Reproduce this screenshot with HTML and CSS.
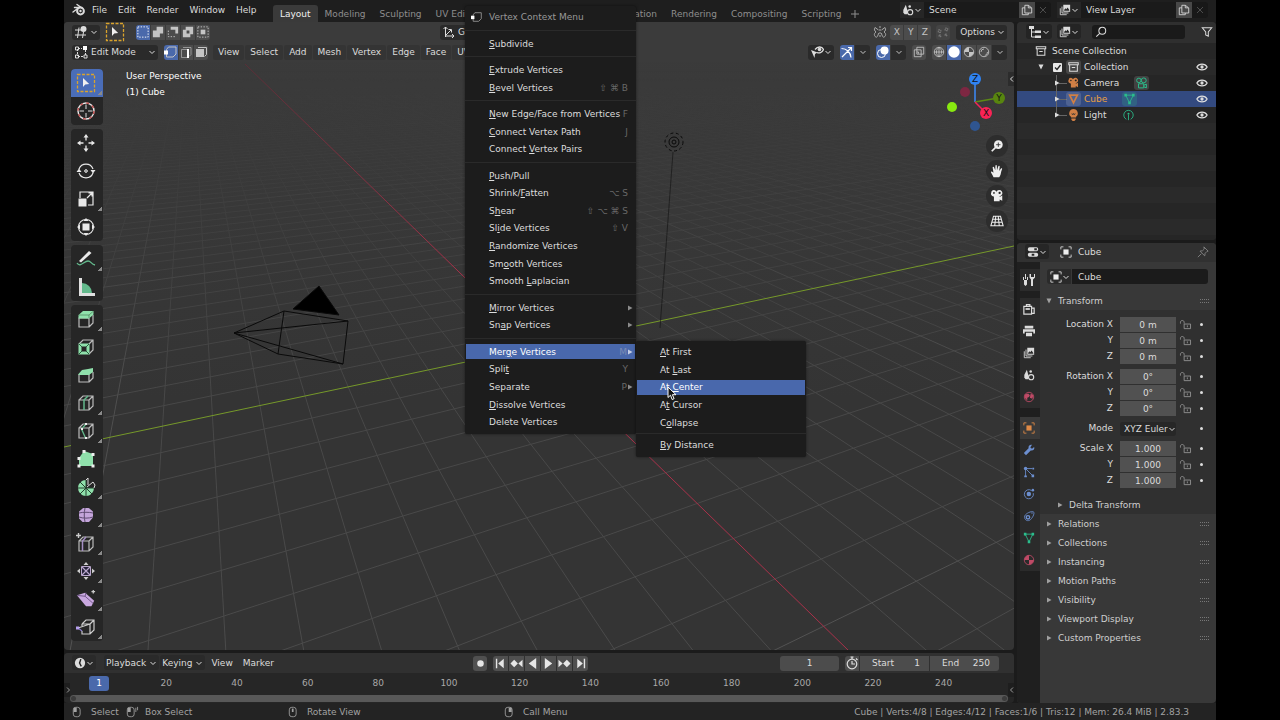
FILE: index.html
```html
<!DOCTYPE html>
<html lang="en">
<head>
<meta charset="utf-8">
<title>Blender</title>
<link rel="stylesheet" href="styles.css">
</head>
<body>
<svg class="defs" aria-hidden="true">
  <symbol id="chev" viewBox="0 0 8 8"><path d="M1.500 3 4 5.500 6.500 3" fill="none" stroke="currentColor"/></symbol>
  <symbol id="chevl" viewBox="0 0 8 8"><path d="M5 1.500 2.500 4 5 6.500" fill="none" stroke="currentColor"/></symbol>
  <symbol id="chevr" viewBox="0 0 8 8"><path d="M3 1.500 5.500 4 3 6.500" fill="none" stroke="currentColor"/></symbol>
  <symbol id="tri" viewBox="0 0 8 8"><path d="M2 1.500v5l4.500-2.500z" fill="currentColor"/></symbol>
  <symbol id="trid" viewBox="0 0 8 8"><path d="M1.500 1.500h5l-2.500 5z" fill="currentColor"/></symbol>
  <symbol id="logo" viewBox="0 0 14 14"><path d="M1 9 7 4.500H2.500M5 1.500l5 3.500" fill="none" stroke="currentColor" stroke-width="1.400" stroke-linecap="round"/><circle cx="8.500" cy="8" r="3.400" fill="none" stroke="currentColor" stroke-width="2"/><circle cx="8.500" cy="8" r="1.200" fill="currentColor"/></symbol>
  <symbol id="editor" viewBox="0 0 14 14"><path d="M1 5h6M1 10h11M5 2.500 3.500 13M9.500 7 8.500 13" stroke="currentColor" fill="none"/><circle cx="9.500" cy="4" r="3" fill="currentColor"/></symbol>
  <symbol id="boxsel" viewBox="0 0 20 20"><rect x="1.500" y="1.500" width="17" height="17" fill="none" stroke="#d9a32c" stroke-width="1.300" stroke-dasharray="3 1.500"/><path d="M7 5v9l2.200-2.400 4-.5z" fill="#f0f0f0"/></symbol>
  <symbol id="s1" viewBox="0 0 15 15"><rect x="2" y="2" width="11" height="11" fill="none" stroke="#fff" stroke-dasharray="1.500 1.500"/></symbol>
  <symbol id="s2" viewBox="0 0 15 15"><path d="M6 2h7v7H9.500v4H2V6h4z" fill="currentColor"/></symbol>
  <symbol id="s3" viewBox="0 0 15 15"><path d="M5 2h8v7h-3V5H5z" fill="currentColor"/><path d="M2.500 6v6.500h7" fill="none" stroke="currentColor" stroke-dasharray="1.500 1.500"/></symbol>
  <symbol id="s4" viewBox="0 0 15 15"><path d="M5 2h8v8h-3v3H2V5h3zM6 6v3h3V6z" fill="currentColor" fill-rule="evenodd"/></symbol>
  <symbol id="s5" viewBox="0 0 15 15"><rect x="2" y="2" width="11" height="11" fill="none" stroke="currentColor" stroke-dasharray="1.500 1.500"/><rect x="5" y="5" width="5" height="5" fill="currentColor"/></symbol>
  <symbol id="axes" viewBox="0 0 14 14"><path d="M3.500 12V2M1.500 4l2-2 2 2M3.500 11h8M10 9l2 2-2 2M4 10l5-5M6.500 4.500h3v3" fill="none" stroke="currentColor"/></symbol>
  <symbol id="editmode" viewBox="0 0 14 14"><path d="M3.500 4v7M4 11.500h6M11.500 10V5M4 3.500h4" stroke="currentColor" stroke-dasharray="2 1" fill="none"/><path d="M1.500 2h3v3h-3zM1.500 10h3v3h-3zM10 10h3v3h-3z" fill="none" stroke="currentColor"/><rect x="9" y="1" width="4" height="4" fill="#fff"/></symbol>
  <symbol id="vert" viewBox="0 0 14 14"><path d="M2.500 6V4.500L4.500 2H12v7l-3 3H2.500V9" fill="none" stroke="currentColor"/><rect x="0" y="5.500" width="4" height="4" fill="#fff"/></symbol>
  <symbol id="edge" viewBox="0 0 14 14"><path d="M8.500 4.500h-6v8h6M4 2.500h8v7l-2 2" fill="none" stroke="currentColor" opacity=".6"/><rect x="8" y="4" width="2" height="9" fill="#fff"/></symbol>
  <symbol id="face" viewBox="0 0 14 14"><path d="M4 2.500h8.500v7l-2 2" fill="none" stroke="currentColor"/><rect x="2" y="4" width="8" height="8" fill="currentColor"/></symbol>
  <symbol id="mirror" viewBox="0 0 14 14"><path d="M7 1v12" stroke="currentColor" stroke-dasharray="2 1"/><path d="M5.500 5 2 2.500C.8 4 1.500 6 3 7-.2 9 2 12 3.500 12.300 5 11 5.500 9 5.500 8M8.500 5 12 2.500c1.200 1.500.5 3.500-1 4.500 3.200 2 1 5-.5 5.300C9 11 8.500 9 8.500 8" fill="none" stroke="currentColor"/></symbol>
  <symbol id="snap" viewBox="0 0 14 14"><path d="M9.500 2.500h3v3h-3zM1.500 4.500h3v3h-3zM2.500 10.500h2v2h-2zM9.500 9.500h2v2h-2z" fill="none" stroke="currentColor" stroke-dasharray="2 1"/></symbol>
  <symbol id="eyecur" viewBox="0 0 14 14"><path d="M5 4.500C8 .8 12 1.500 13.500 4.500 12 8 9 8.500 7 7.500" fill="none" stroke="currentColor" stroke-width="1.300"/><circle cx="9.500" cy="4.500" r="1.800" fill="currentColor"/><path d="M1 5l6.500 2.500L5 9l-.5 4z" fill="currentColor"/></symbol>
  <symbol id="gizmo" viewBox="0 0 14 14"><path d="M2 12 11.500 2.500M8 2.500h3.500V6M1.500 3.500c5 0 9 3.500 9.500 9" fill="none" stroke="#fff" stroke-width="1.200"/></symbol>
  <symbol id="over" viewBox="0 0 14 14"><circle cx="5.500" cy="8.500" r="4" fill="none" stroke="#fff"/><circle cx="8.500" cy="5.500" r="4" fill="#fff"/></symbol>
  <symbol id="xray" viewBox="0 0 14 14"><path d="M1.500 4.500h8v8h-8zM4.500 1.500h8v8h-8z" fill="none" stroke="currentColor"/><path d="M4.500 7h2v2" stroke="currentColor" fill="none"/></symbol>
  <symbol id="wire" viewBox="0 0 14 14"><circle cx="7" cy="7" r="5.500" fill="none" stroke="currentColor"/><path d="M1.500 7h11M7 1.500v11M7 1.500c-4 3-4 8 0 11M7 1.500c4 3 4 8 0 11" fill="none" stroke="currentColor"/></symbol>
  <symbol id="solid" viewBox="0 0 14 14"><circle cx="7" cy="7" r="5.700" fill="#fff"/></symbol>
  <symbol id="mat" viewBox="0 0 14 14"><circle cx="7" cy="7" r="5.500" fill="none" stroke="currentColor"/><path d="M7 1.500A5.500 5.500 0 0 0 1.500 7h5.500zM7 7h5.500A5.500 5.500 0 0 1 7 12.500z" fill="currentColor"/></symbol>
  <symbol id="rend" viewBox="0 0 14 14"><circle cx="7" cy="7" r="5.500" fill="none" stroke="currentColor"/><path d="M3.500 7A3.500 3.500 0 0 1 7 3.500M8 11c2-.5 3-2 3-4" fill="none" stroke="currentColor"/></symbol>
  <symbol id="cursor3d" viewBox="0 0 20 20"><circle cx="10" cy="10" r="8" fill="none" stroke="#e8e8e8" stroke-width="1.400"/><circle cx="10" cy="10" r="8" fill="none" stroke="#c25050" stroke-width="1.400" stroke-dasharray="3 3.280"/><path d="M10 3.500v4.500M10 12v4.500M3.500 10H8M12 10h4.500" stroke="#ddd" fill="none"/></symbol>
  <symbol id="move" viewBox="0 0 20 20"><path d="M10 4v3.500M10 12.500V16M4 10h3.500M12.500 10H16" stroke="#e8e8e8" stroke-width="1.300"/><path d="M10 1l2.500 3.500h-5zM10 19l2.500-3.500h-5zM1 10l3.500-2.500v5zM19 10l-3.500-2.500v5z" fill="#e8e8e8"/></symbol>
  <symbol id="rot" viewBox="0 0 20 20"><path d="M3 8a7.500 7.500 0 0 1 14 0M17 12a7.500 7.500 0 0 1-14 0" fill="none" stroke="#e8e8e8" stroke-width="1.200"/><path d="M.5 11 3 7.500 5.500 11zM14.500 9l2.500 3.500L19.500 9z" fill="#e8e8e8"/><path d="M10 8l2 2-2 2-2-2z" fill="#aaa" stroke="#aaa"/></symbol>
  <symbol id="scale" viewBox="0 0 20 20"><path d="M4 9V3h13v13h-5M11 9l5-5M12.500 4H16v3.500" fill="none" stroke="#e8e8e8" stroke-width="1.200"/><rect x="2.500" y="9.500" width="8" height="8" fill="#e8e8e8"/></symbol>
  <symbol id="xform" viewBox="0 0 20 20"><circle cx="10" cy="10" r="7.500" fill="none" stroke="#e8e8e8" stroke-width="1.100"/><rect x="6.500" y="6.500" width="7" height="7" fill="#e8e8e8"/><path d="M10 1l2.500 3h-5zM10 19l2.500-3h-5zM1 10l3-2.500v5zM19 10l-3-2.500v5z" fill="#e8e8e8"/></symbol>
  <symbol id="annot" viewBox="0 0 20 20"><path d="M3 12 13 2l2.500 2L5 13.500z" fill="#e8e8e8"/><path d="M1 14c3 5 7-2 11-2 3 0 3 3 7 4" fill="none" stroke="#63b98c" stroke-width="1.300"/></symbol>
  <symbol id="measure" viewBox="0 0 20 20"><path d="M6 6a10 10 0 0 1 10 10H6z" fill="#63b98c"/><path d="M3 1h3v15h13v3H3z" fill="#e0e0e0"/></symbol>
  <symbol id="extrude" viewBox="0 0 20 20"><path d="M3 9h10v9H3zM13 18l4-4V6" fill="none" stroke="#bbb" stroke-width="1.200"/><path d="M2.500 6 7 2h10.500v3.500L13 9.500H2.500z" fill="#8fe0ab"/><path d="M3 6h10l4-3.500M13 6v3" fill="none" stroke="#3d6b4c" stroke-width=".6"/></symbol>
  <symbol id="inset" viewBox="0 0 20 20"><path d="M3 7l4-4h10v10l-4 4M13 7l4-4" fill="none" stroke="#bbb" stroke-width="1.200"/><path d="M2.500 6.500h11v11h-11zM5.500 9.500v5h5v-5z" fill="#8fe0ab" fill-rule="evenodd"/><path d="M3 7l3 3M13 7l-3 3M3 17l3-3M13 17l-3-3" stroke="#27603c"/></symbol>
  <symbol id="bevel" viewBox="0 0 20 20"><path d="M3 9v8h10V9M13 17l4-4V7" fill="none" stroke="#bbb" stroke-width="1.200"/><path d="M2.500 9 6 5l6-1 5-1v4l-4 3H2.500z" fill="#8fe0ab"/></symbol>
  <symbol id="loop" viewBox="0 0 20 20"><path d="M3 7l4-4h10v10l-4 4H3zM3 7h10v10M13 7l4-4" fill="none" stroke="#bbb" stroke-width="1.200"/><path d="M8 17V7l4-4" fill="none" stroke="#63b98c" stroke-width="1.500"/></symbol>
  <symbol id="knife" viewBox="0 0 20 20"><path d="M3 7l4-4h10v10l-4 4H3zM3 7h10v10M13 7l4-4" fill="none" stroke="#bbb" stroke-width="1.200"/><path d="M10 3 5.500 8 10 18" fill="none" stroke="#63b98c" stroke-width="1.300"/><path d="M9 2h2v2H9zM5 7h2v2H5zM9 16h2v2H9z" fill="#eee"/></symbol>
  <symbol id="poly" viewBox="0 0 20 20"><path d="M3 17V9l5-7 9 3v12z" fill="#8fe0ab"/><path d="M1.500 15.500h3v3h-3zM1.500 8h3v3h-3zM6.500 1h3v3h-3zM15.500 4h3v3h-3zM15.500 15.500h3v3h-3z" fill="#eee"/></symbol>
  <symbol id="spin" viewBox="0 0 20 20"><path d="M10 11V3a8 8 0 1 0 8 8z" fill="#8fe0ab"/><path d="M10 11V3M10 11H2M10 11v8M10 11h8M10 11 4 5M10 11l-6 6M10 11l6 6" stroke="#24402e" stroke-width="1"/><path d="M10 3l2-2v7M11 10l6-5 2 3-1 3" fill="none" stroke="#ddd"/></symbol>
  <symbol id="smooth" viewBox="0 0 20 20"><path d="M4 7l3.500-3h5L16 7v5l-3.500 4H7l-3-3z" fill="#c4a5da" stroke="#c4a5da" stroke-width="2" stroke-linejoin="round"/><path d="M3 8c4-1 10-1 14 0M3 12c4 1.500 10 1.500 14 0M9 3c-1 5-1 9 0 14" fill="none" stroke="#5e4a70"/></symbol>
  <symbol id="slide" viewBox="0 0 20 20"><path d="M3 8l4-4h10v10l-4 4H3zM3 8h10v10M13 8l4-4" fill="none" stroke="#bbb" stroke-width="1.200"/><path d="M6.500 18V8L10 4" fill="none" stroke="#a58fc4" stroke-width="1.500"/><path d="M2.500 0v5M0 2.500h5" stroke="#ccc" stroke-width="1.400"/></symbol>
  <symbol id="shrink" viewBox="0 0 20 20"><path d="M10 1l2.500 3h-5zM10 19l2.500-3h-5zM1 10l3-2.500v5zM19 10l-3-2.500v5z" fill="#ccc"/><path d="M5.500 5.500h9v9h-9z" fill="#26223a" stroke="#b8a6cc"/><path d="M6 6l8 8M14 6l-8 8" stroke="#b8a6cc" stroke-width="1.200"/></symbol>
  <symbol id="shear" viewBox="0 0 22 20"><path d="M1 6l9-3 10 9-3 6-6 0z" fill="#c9a8e0"/><path d="M1 6l9 1 9 8M10 7l1-4" fill="none" stroke="#6a5282"/><path d="M19 0v4M17 2h4" stroke="#ccc" stroke-width="1.400"/></symbol>
  <symbol id="rip" viewBox="0 0 20 20"><path d="M6 7l4-4h8v10l-4 4H6v-3M6 7h8v10M14 7l4-4M6 7v2M2 11l12-4" fill="none" stroke="#ccc" stroke-width="1.200"/><path d="M2 11l4 3" stroke="#8d7fd0" stroke-width="1.200"/><rect x="0" y="9.500" width="3" height="3" fill="#b7a0f0"/></symbol>
  <symbol id="zoomi" viewBox="0 0 16 16"><path d="M2 14l5-5" stroke="#eee" stroke-width="2"/><circle cx="9.500" cy="6.500" r="5" fill="#eee"/><path d="M9.500 4v5M7 6.500h5" stroke="#333"/></symbol>
  <symbol id="hand" viewBox="0 0 16 16"><path d="M4 15C3 12 1 10 1 9c1-1 2 0 3 1L3 4c0-1 1.500-1 1.700 0L6 7l.2-5c0-1 1.600-1 1.600 0L8 7l1.500-4.500c.3-1 1.700-.7 1.600.3L10.500 8l2-2.800c.6-.8 1.700 0 1.300.8C12 10 13 12 10.500 15z" fill="#eee"/></symbol>
  <symbol id="cam" viewBox="0 0 16 16"><path d="M4.500 1a3 3 0 0 1 2.800 2A3.600 3.600 0 1 1 11 8.200V9l3-1.500v6L11 12v2H4.500V8.500H4A3 3 0 0 1 1.500 4 3 3 0 0 1 4.500 1z" fill="currentColor"/><circle cx="4.500" cy="4.500" r="1" fill="#222"/><circle cx="11" cy="4.500" r="1.300" fill="#222"/></symbol>
  <symbol id="camo" viewBox="0 0 16 16"><circle cx="4.500" cy="4.500" r="3" fill="none" stroke="currentColor" stroke-width="1.300"/><circle cx="11" cy="4.500" r="3.300" fill="none" stroke="currentColor" stroke-width="1.300"/><path d="M4 9h7v5.500H4zM11 11l3.500-1.500v5L11 13" fill="none" stroke="currentColor" stroke-width="1.300"/></symbol>
  <symbol id="persp" viewBox="0 0 16 16"><path d="M4 2.500h8l3 11H1zM3.200 6h9.600M2.200 9.500h11.600M6.600 2.500l-1.200 11M9.400 2.500l1.200 11" fill="none" stroke="#eee" stroke-width="1.200"/></symbol>
  <symbol id="scene" viewBox="0 0 14 14"><path d="M4.500 1 1.500 7v3l1.500 2h3l1-2z" fill="currentColor"/><circle cx="9.500" cy="9.500" r="3" fill="none" stroke="currentColor" stroke-width="1.300"/><circle cx="9" cy="3" r="1.500" fill="currentColor"/></symbol>
  <symbol id="layers" viewBox="0 0 14 14"><path d="M1.500 5v7.500H9M3.500 3v7.500H11" fill="none" stroke="currentColor"/><path d="M5 1h8v8H5zM6 8h6V7L10 4 8.500 6 7.500 5 6 7z" fill="currentColor" fill-rule="evenodd"/></symbol>
  <symbol id="copy" viewBox="0 0 14 14"><path d="M4.500 4.500h-3v8h7v-2M8.500 1.500h-4v9h8v-6zM8.500 1.500v3h3.500" fill="none" stroke="currentColor"/></symbol>
  <symbol id="x" viewBox="0 0 14 14"><path d="M3.500 3.500l7 7M10.500 3.500l-7 7" stroke="currentColor"/></symbol>
  <symbol id="tree" viewBox="0 0 14 14"><path d="M1 2.500h4M3.500 3v9H7M3.500 7H7" fill="none" stroke="currentColor"/><path d="M1 1h5v3H1zM7 5.500h6v2.500H7zM7 10.500h6V13H7z" fill="currentColor"/></symbol>
  <symbol id="search" viewBox="0 0 14 14"><circle cx="8.500" cy="5.500" r="4" fill="none" stroke="currentColor" stroke-width="1.200"/><path d="M5.500 8.500 1.500 12.500" stroke="currentColor" stroke-width="1.200"/></symbol>
  <symbol id="filter" viewBox="0 0 14 14"><path d="M1.500 2h11L8.500 7v5l-3-1.500V7z" fill="none" stroke="currentColor" stroke-width="1.200"/></symbol>
  <symbol id="box" viewBox="0 0 14 14"><path d="M1.500 2h11v2.500h-11zM2.500 5v7h9V5M5 7.500h4" fill="none" stroke="currentColor" stroke-width="1.200"/></symbol>
  <symbol id="eye" viewBox="0 0 14 14"><path d="M1 7c2.500-4.500 9.500-4.500 12 0-2.500 4.500-9.500 4.500-12 0z" fill="none" stroke="currentColor" stroke-width="1.400"/><circle cx="7" cy="7" r="1.900" fill="currentColor"/></symbol>
  <symbol id="mesh" viewBox="0 0 14 14"><path d="M2.500 2.500h9L7 11.500z" fill="none" stroke="currentColor" stroke-width="2"/></symbol>
  <symbol id="meshd" viewBox="0 0 14 14"><path d="M2.500 2.500h9L7 11.500z" fill="none" stroke="currentColor"/><path d="M1 1h3v3H1zM10 1h3v3h-3zM5.500 10h3v3h-3z" fill="currentColor"/></symbol>
  <symbol id="bulb" viewBox="0 0 14 14"><path d="M7 0a5 5 0 0 1 3 9v1H4V9a5 5 0 0 1 3-9zM4.500 11h5v1.500L8 14H6l-1.500-1.500z" fill="currentColor"/><path d="M5 5l1 2 1-2 1 2 1-2" fill="none" stroke="#333" stroke-width=".8"/></symbol>
  <symbol id="lightd" viewBox="0 0 14 14"><path d="M4.500 12A5.500 5.500 0 1 1 9.500 12M7 7v6" fill="none" stroke="currentColor"/><circle cx="7" cy="5.500" r="1.200" fill="currentColor"/></symbol>
  <symbol id="props" viewBox="0 0 14 14"><rect x="1" y="1.500" width="12" height="4.500" rx="2" fill="currentColor"/><rect x="1" y="8" width="12" height="4.500" rx="2" fill="currentColor"/><path d="M8.500 2.500h3v2.500h-3zM5.500 9h3v2.500h-3z" fill="#262626"/></symbol>
  <symbol id="obj" viewBox="0 0 14 14"><path d="M1 4V1h3M10 1h3v3M13 10v3h-3M4 13H1v-3" fill="none" stroke="currentColor"/><rect x="4" y="4" width="6" height="6" fill="var(--core,currentColor)"/></symbol>
  <symbol id="pin" viewBox="0 0 14 14"><path d="M8 1l5 5-1.500.5-2 2-.5 3-5.500-5.500 3-.5 2-2zM5 9l-4 4" fill="none" stroke="currentColor"/></symbol>
  <symbol id="tools" viewBox="0 0 14 14"><path d="M3.500 1v5M1.500 4v3M5.500 4v3" stroke="currentColor"/><path d="M2 7h3v4.500L3.500 13 2 11.500zM7.500 1v3.500L9 6.500V13h2V6.500l2-2V1h-1v3h-3V1z" fill="currentColor"/></symbol>
  <symbol id="render" viewBox="0 0 14 14"><path d="M1 4h9v9H1zM4 4V2h4v2M10 6h3v6h-3" fill="none" stroke="currentColor" stroke-width="1.400"/><path d="M3 6h5v2H3z" fill="currentColor"/></symbol>
  <symbol id="print" viewBox="0 0 14 14"><path d="M2 1h10v3H2zM0 5h14v5h-2V8H2v2H0zM3.500 9h7v4h-7z" fill="currentColor"/></symbol>
  <symbol id="world" viewBox="0 0 14 14"><circle cx="7" cy="7" r="5.500" fill="none" stroke="currentColor"/><path d="M2 4l4-1 2 2-1 2-2 1v3L2 8zM9 3l3 2-1 4-3-1z" fill="currentColor"/></symbol>
  <symbol id="wrench" viewBox="0 0 14 14"><path d="M13 3.500 10.500 5.500 8.500 4l2-3C8 .5 6 2 6.500 5L1 10.500 3.500 13 9 7.500c3 .5 5-1.500 4-4z" fill="currentColor"/></symbol>
  <symbol id="part" viewBox="0 0 14 14"><path d="M3 3l8 8M3 3v9M3 3h8" stroke="currentColor"/><circle cx="3" cy="3" r="2" fill="currentColor"/><path d="M10 10h3v3h-3zM1.500 11h3v2h-3zM11 2h2v2h-2z" fill="currentColor"/></symbol>
  <symbol id="phys" viewBox="0 0 14 14"><path d="M10 3A5.300 5.300 0 1 0 12 6" fill="none" stroke="currentColor"/><circle cx="6.800" cy="7" r="2.600" fill="currentColor"/><circle cx="11.500" cy="2.500" r="1.500" fill="currentColor"/></symbol>
  <symbol id="constr" viewBox="0 0 14 14"><path d="M2 7C3 4 10 1 12 2s0 6-3 9-8 1-7-4z" fill="none" stroke="currentColor"/><circle cx="5.800" cy="8.500" r="2" fill="none" stroke="currentColor" stroke-width="1.600"/><circle cx="10.500" cy="3.500" r=".8" fill="currentColor"/></symbol>
  <symbol id="lock" viewBox="0 0 14 12"><path d="M5.500 5.500h7v5h-7zM9 7v2M5.500 5V3.500C5.500 1 1.500 1 1.500 3.500V5" fill="none" stroke="currentColor"/></symbol>
  <symbol id="time" viewBox="0 0 14 14"><circle cx="7" cy="7" r="6" fill="currentColor"/><path d="M8 2.500 6.500 7 8.500 11" fill="none" stroke="#222" stroke-width="1.700"/></symbol>
  <symbol id="watch" viewBox="0 0 14 14"><circle cx="7" cy="8" r="4.800" fill="none" stroke="currentColor" stroke-width="1.200"/><path d="M7 5v3h3M5.500 1h3M7 1v2M11 2.500l1.500 1.500" fill="none" stroke="currentColor" stroke-width="1.200"/></symbol>
  <symbol id="m1" viewBox="0 0 16 14"><rect x="2.500" y="1.500" width="8" height="11" rx="3" fill="none" stroke="currentColor"/><path d="M3 2h3.500v5H3z" fill="currentColor"/></symbol>
  <symbol id="m1d" viewBox="0 0 16 14"><rect x="2.500" y="1.500" width="8" height="11" rx="3" fill="none" stroke="currentColor"/><path d="M3 2h3.500v5H3z" fill="currentColor"/><path d="M12.500 2v5M14.500 1v4" stroke="currentColor"/></symbol>
  <symbol id="m2" viewBox="0 0 16 14"><rect x="2.500" y="1.500" width="8" height="11" rx="3" fill="none" stroke="currentColor"/><path d="M5.500 3h2v4h-2z" fill="currentColor"/></symbol>
  <symbol id="m3" viewBox="0 0 16 14"><rect x="2.500" y="1.500" width="8" height="11" rx="3" fill="none" stroke="currentColor"/><path d="M6.500 2H10v5H6.500z" fill="currentColor"/></symbol>
</svg>

<div class="app">
  <header class="topbar">
    <nav class="menus">
      <button aria-label="Blender"><svg class="i14"><use href="#logo"/></svg></button>
      <button>File</button><button>Edit</button><button>Render</button><button>Window</button><button>Help</button>
    </nav>
    <nav class="tabs">
      <button class="on">Layout</button><button>Modeling</button><button>Sculpting</button><button>UV Editing</button><button class="covered">Texture Paint</button><button class="covered">Shading</button><button>Animation</button><button>Rendering</button><button>Compositing</button><button>Scripting</button><button class="plus" aria-label="Add workspace"><svg viewBox="0 0 8 8"><path d="M4 0v8M0 4h8" stroke="currentColor"/></svg></button>
    </nav>
    <div class="ids">
      <div class="idblock"><button class="idpick" aria-label="Browse scenes"><svg class="i12"><use href="#scene"/></svg><svg class="i8"><use href="#chev"/></svg></button><input aria-label="Scene" value="Scene"><button class="lit" aria-label="New scene"><svg class="i12"><use href="#copy"/></svg></button><button class="dim" aria-label="Remove scene"><svg class="i12"><use href="#x"/></svg></button></div>
      <div class="idblock"><button class="idpick" aria-label="Browse view layers"><svg class="i12"><use href="#layers"/></svg><svg class="i8"><use href="#chev"/></svg></button><input aria-label="View Layer" value="View Layer"><button class="lit" aria-label="New layer"><svg class="i12"><use href="#copy"/></svg></button><button class="dim" aria-label="Remove layer"><svg class="i12"><use href="#x"/></svg></button></div>
    </div>
  </header>

  <div class="workspace">
    <main class="left">
      <section class="viewport">
        <svg class="scene" viewBox="64 22 950 628" preserveAspectRatio="xMidYMid slice" aria-hidden="true">
          <defs>
            <linearGradient id="fade" gradientUnits="userSpaceOnUse" x1="0" y1="70" x2="0" y2="650"><stop offset="0" stop-color="#000"/><stop offset=".12" stop-color="#222"/><stop offset=".3" stop-color="#777"/><stop offset=".55" stop-color="#ddd"/><stop offset="1" stop-color="#fff"/></linearGradient>
            <mask id="far" maskUnits="userSpaceOnUse" x="64" y="22" width="950" height="628"><rect x="64" y="22" width="950" height="628" fill="url(#fade)"/></mask>
            <linearGradient id="redfade" gradientUnits="userSpaceOnUse" x1="245" y1="64" x2="465" y2="278"><stop offset="0" stop-color="#5a2e37"/><stop offset="1" stop-color="#a83049"/></linearGradient>
          </defs>
          <g mask="url(#far)"><path id="grid" class="grid"/><path id="grid10" class="grid major"/></g>
          <path d="M245 64 848 650" stroke="url(#redfade)" class="axis"/>
          <path d="M64 447 1014 246" stroke="#76992a" class="axis"/>
          <g class="object">
            <path d="M234 333 284 311 348 321 343 364 278 354zM234 333 348 321M234 333 343 364M284 311 278 354"/>
            <path d="M293 309 319 286 339 315z" fill="#000"/>
            <path d="M673 152 660 328" opacity=".5"/>
            <circle cx="674" cy="142" r="2"/><circle cx="674" cy="142" r="5"/><circle cx="674" cy="142" r="9" stroke-dasharray="3 2.500"/>
          </g>
        </svg>
        <div class="vhead">
          <div class="row">
            <button class="dark" aria-label="Editor type"><svg class="i14"><use href="#editor"/></svg><svg class="i8"><use href="#chev"/></svg></button>
            <button class="tool" aria-label="Active tool"><svg class="i20"><use href="#boxsel"/></svg></button>
            <div class="group"><button class="on" aria-label="Set"><svg class="i14"><use href="#s1"/></svg></button><button aria-label="Extend"><svg class="i14"><use href="#s2"/></svg></button><button aria-label="Subtract"><svg class="i14"><use href="#s3"/></svg></button><button aria-label="Invert"><svg class="i14"><use href="#s4"/></svg></button><button aria-label="Intersect"><svg class="i14"><use href="#s5"/></svg></button></div>
            <button class="dark orient"><svg class="i14"><use href="#axes"/></svg>Global</button>
            <span class="push"></span>
            <svg class="i14 mir"><use href="#mirror"/></svg>
            <div class="group xyz"><button>X</button><button>Y</button><button>Z</button></div>
            <button class="soft" aria-label="Automerge"><svg class="i12"><use href="#snap"/></svg></button>
            <button class="dark">Options<svg class="i8"><use href="#chev"/></svg></button>
          </div>
          <div class="row">
            <button class="dark mode"><svg class="i14"><use href="#editmode"/></svg><span>Edit Mode</span><svg class="i8"><use href="#chev"/></svg></button>
            <div class="group"><button class="on" aria-label="Vertex select"><svg class="i14"><use href="#vert"/></svg></button><button aria-label="Edge select"><svg class="i14"><use href="#edge"/></svg></button><button aria-label="Face select"><svg class="i14"><use href="#face"/></svg></button></div>
            <nav class="vmenus"><button>View</button><button>Select</button><button>Add</button><button>Mesh</button><button>Vertex</button><button>Edge</button><button>Face</button><button>UV</button></nav>
            <span class="push"></span>
            <div class="shade">
              <button class="dark vis" aria-label="Visibility"><svg class="i14"><use href="#eyecur"/></svg><svg class="i8"><use href="#chev"/></svg></button>
              <div class="group"><button class="on" aria-label="Gizmos"><svg class="i14"><use href="#gizmo"/></svg></button><button class="drop" aria-label="Gizmo options"><svg class="i8"><use href="#chev"/></svg></button></div>
              <div class="group"><button class="on" aria-label="Overlays"><svg class="i14"><use href="#over"/></svg></button><button class="drop" aria-label="Overlay options"><svg class="i8"><use href="#chev"/></svg></button></div>
              <div class="group"><button aria-label="X-ray"><svg class="i12"><use href="#xray"/></svg></button></div>
              <div class="group"><button aria-label="Wireframe"><svg class="i12"><use href="#wire"/></svg></button><button class="on" aria-label="Solid"><svg class="i14"><use href="#solid"/></svg></button><button aria-label="Material"><svg class="i12"><use href="#mat"/></svg></button><button aria-label="Rendered"><svg class="i12"><use href="#rend"/></svg></button><button class="drop" aria-label="Shading options"><svg class="i8"><use href="#chev"/></svg></button></div>
            </div>
          </div>
        </div>
        <div class="vbody">
          <div class="toolbar">
            <div class="tg"><button class="on more" aria-label="Select Box"><svg><use href="#boxsel"/></svg></button><button aria-label="Cursor"><svg><use href="#cursor3d"/></svg></button></div>
            <div class="tg"><button aria-label="Move"><svg><use href="#move"/></svg></button><button aria-label="Rotate"><svg><use href="#rot"/></svg></button><button class="more" aria-label="Scale"><svg><use href="#scale"/></svg></button><button aria-label="Transform"><svg><use href="#xform"/></svg></button></div>
            <div class="tg"><button class="more" aria-label="Annotate"><svg><use href="#annot"/></svg></button><button aria-label="Measure"><svg><use href="#measure"/></svg></button></div>
            <div class="tg"><button class="more" aria-label="Extrude"><svg><use href="#extrude"/></svg></button><button aria-label="Inset"><svg><use href="#inset"/></svg></button><button aria-label="Bevel"><svg><use href="#bevel"/></svg></button><button class="more" aria-label="Loop Cut"><svg><use href="#loop"/></svg></button><button class="more" aria-label="Knife"><svg><use href="#knife"/></svg></button><button aria-label="Poly Build"><svg><use href="#poly"/></svg></button><button class="more" aria-label="Spin"><svg><use href="#spin"/></svg></button><button class="more" aria-label="Smooth"><svg><use href="#smooth"/></svg></button><button class="more" aria-label="Edge Slide"><svg><use href="#slide"/></svg></button><button class="more" aria-label="Shrink/Fatten"><svg><use href="#shrink"/></svg></button><button class="more" aria-label="Shear"><svg><use href="#shear"/></svg></button><button class="more" aria-label="Rip Region"><svg><use href="#rip"/></svg></button></div>
          </div>
          <div class="info"><p>User Perspective</p><p>(1) Cube</p></div>
          <div class="nav">
            <svg class="gizmo" viewBox="0 0 64 64">
              <circle cx="22" cy="22" r="5" fill="#7d2742"/><circle cx="32" cy="56" r="5" fill="#2f5590"/><circle cx="9" cy="37" r="5" fill="#88e910"/>
              <path d="M32 32V9" stroke="#3d8bfa" stroke-width="1.500"/><path d="M32 32 55 28" stroke="#5c8a14" stroke-width="1.500"/><path d="M32 32 43 43" stroke="#f5235a" stroke-width="1.500"/>
              <circle cx="32" cy="9" r="6" fill="#2f83f2"/><circle cx="56" cy="28" r="6" fill="#58850f"/><circle cx="43" cy="43" r="6" fill="#fa2355"/>
              <text x="32" y="12">Z</text><text x="56" y="31">Y</text><text x="43" y="46">X</text>
            </svg>
            <button aria-label="Zoom"><svg><use href="#zoomi"/></svg></button><button aria-label="Pan"><svg><use href="#hand"/></svg></button><button aria-label="Camera view"><svg><use href="#cam"/></svg></button><button aria-label="Perspective"><svg><use href="#persp"/></svg></button>
          </div>
          <button class="side" aria-label="Show sidebar"><svg class="i8"><use href="#chevl"/></svg></button>
        </div>
      </section>

      <section class="timeline">
        <div class="thead">
          <div class="tmenus">
            <button class="dark" aria-label="Editor type"><svg class="i12"><use href="#time"/></svg><svg class="i8"><use href="#chev"/></svg></button>
            <button class="dark">Playback<svg class="i8"><use href="#chev"/></svg></button><button class="dark">Keying<svg class="i8"><use href="#chev"/></svg></button><button class="pl">View</button><button class="pl">Marker</button>
          </div>
          <div class="play">
            <button class="rec" aria-label="Auto key"><svg viewBox="0 0 14 14"><circle cx="7" cy="7" r="3.500"/></svg></button>
            <div class="group"><button aria-label="First"><svg viewBox="0 0 14 14"><path d="M2 2h1.500v10H2zM10.500 2v10L4.500 7z"/></svg></button><button aria-label="Previous key"><svg viewBox="0 0 14 14"><path d="M4.500 3l4 4-4 4-4-4zM13.500 3v8L9 7z"/></svg></button><button aria-label="Play back"><svg viewBox="0 0 14 14"><path d="M11 1v12L3 7z"/></svg></button><button aria-label="Play"><svg viewBox="0 0 14 14"><path d="M3 1v12l8-6z"/></svg></button><button aria-label="Next key"><svg viewBox="0 0 14 14"><path d="M9.500 3l4 4-4 4-4-4zM.5 3v8L5 7z"/></svg></button><button aria-label="Last"><svg viewBox="0 0 14 14"><path d="M10.500 2H12v10h-1.500zM3.500 2v10l6-5z"/></svg></button></div>
          </div>
          <div class="frames">
            <input class="cur" aria-label="Current frame" value="1">
            <div class="range"><button aria-label="Preview range"><svg class="i14"><use href="#watch"/></svg></button><label>Start<input value="1"></label><label>End<input value="250"></label></div>
          </div>
        </div>
        <div class="ruler" id="ruler"><b class="now">1</b></div>
        <div class="scroll"><i></i></div>
        <button class="edgetab lt" aria-label="Show channels"><svg class="i8"><use href="#chevr"/></svg></button>
        <button class="edgetab rt" aria-label="Show sidebar"><svg class="i8"><use href="#chevl"/></svg></button>
      </section>
    </main>

    <aside class="right">
      <section class="outliner">
        <div class="ohead"><button class="dark" aria-label="Editor type"><svg class="i14"><use href="#tree"/></svg><svg class="i8"><use href="#chev"/></svg></button><button class="dark" aria-label="Display mode"><svg class="i12"><use href="#layers"/></svg><svg class="i8"><use href="#chev"/></svg></button><label class="find"><svg class="i12"><use href="#search"/></svg><input aria-label="Search"></label><button class="fil" aria-label="Filter"><svg class="i12"><use href="#filter"/></svg></button></div>
        <div class="rows">
          <div class="orow l0"><svg class="i12"><use href="#box"/></svg><span>Scene Collection</span></div>
          <div class="orow l1"><svg class="i8"><use href="#trid"/></svg><input type="checkbox" checked aria-label="Collection enabled"><svg class="ic chip"><use href="#box"/></svg><span>Collection</span><button class="eye" aria-label="Hide Collection"><svg class="i12"><use href="#eye"/></svg></button></div>
          <div class="orow l2"><svg class="i8"><use href="#tri"/></svg><svg class="ic or"><use href="#cam"/></svg><span>Camera</span><svg class="ic gr chip"><use href="#camo"/></svg><button class="eye" aria-label="Hide Camera"><svg class="i12"><use href="#eye"/></svg></button></div>
          <div class="orow l2 sel"><svg class="i8"><use href="#tri"/></svg><svg class="ic or chip"><use href="#mesh"/></svg><span>Cube</span><svg class="ic gr tint"><use href="#meshd"/></svg><button class="eye" aria-label="Hide Cube"><svg class="i12"><use href="#eye"/></svg></button></div>
          <div class="orow l2"><svg class="i8"><use href="#tri"/></svg><svg class="ic or"><use href="#bulb"/></svg><span>Light</span><svg class="ic gr"><use href="#lightd"/></svg><button class="eye" aria-label="Hide Light"><svg class="i12"><use href="#eye"/></svg></button></div>
        </div>
      </section>

      <section class="props">
        <div class="phead"><button class="dark" aria-label="Editor type"><svg class="i12"><use href="#props"/></svg><svg class="i8"><use href="#chev"/></svg></button><svg class="i12 ob"><use href="#obj"/></svg><span>Cube</span><button class="pin" aria-label="Pin"><svg class="i12"><use href="#pin"/></svg></button></div>
        <div class="pmain">
          <nav class="ptabs">
            <button aria-label="Tool"><svg class="i14"><use href="#tools"/></svg></button>
            <button class="first" aria-label="Render"><svg class="i12"><use href="#render"/></svg></button><button aria-label="Output"><svg class="i12"><use href="#print"/></svg></button><button aria-label="View Layer"><svg class="i12"><use href="#layers"/></svg></button><button aria-label="Scene"><svg class="i12"><use href="#scene"/></svg></button><button class="rd" aria-label="World"><svg class="i12"><use href="#world"/></svg></button>
            <button class="first on" aria-label="Object"><svg class="i12"><use href="#obj"/></svg></button><button class="bl" aria-label="Modifiers"><svg class="i12"><use href="#wrench"/></svg></button><button class="bl" aria-label="Particles"><svg class="i12"><use href="#part"/></svg></button><button class="bl" aria-label="Physics"><svg class="i12"><use href="#phys"/></svg></button><button class="bl" aria-label="Constraints"><svg class="i12"><use href="#constr"/></svg></button><button class="gr" aria-label="Data"><svg class="i12"><use href="#meshd"/></svg></button><button class="rd" aria-label="Material"><svg class="i12"><use href="#mat"/></svg></button>
          </nav>
          <div class="panels">
            <div class="name"><button aria-label="Browse object"><svg class="i12 obn"><use href="#obj"/></svg><svg class="i8"><use href="#chev"/></svg></button><input aria-label="Name" value="Cube"></div>
            <button class="panel"><svg class="i8"><use href="#trid"/></svg>Transform<i class="grip"></i></button>
            <div class="transform">
              <div class="set">
                <label for="lx">Location X</label><input id="lx" value="0 m"><svg class="lk"><use href="#lock"/></svg><i></i>
                <label for="ly">Y</label><input id="ly" value="0 m"><svg class="lk"><use href="#lock"/></svg><i></i>
                <label for="lz">Z</label><input id="lz" value="0 m"><svg class="lk"><use href="#lock"/></svg><i></i>
              </div>
              <div class="set">
                <label for="rx">Rotation X</label><input id="rx" value="0°"><svg class="lk"><use href="#lock"/></svg><i></i>
                <label for="ry">Y</label><input id="ry" value="0°"><svg class="lk"><use href="#lock"/></svg><i></i>
                <label for="rz">Z</label><input id="rz" value="0°"><svg class="lk"><use href="#lock"/></svg><i></i>
              </div>
              <div class="set">
                <label for="rm">Mode</label><div class="pick"><select id="rm"><option>XYZ Euler</option></select><svg class="i8"><use href="#chev"/></svg></div><b></b><i></i>
              </div>
              <div class="set">
                <label for="sx">Scale X</label><input id="sx" value="1.000"><svg class="lk"><use href="#lock"/></svg><i></i>
                <label for="sy">Y</label><input id="sy" value="1.000"><svg class="lk"><use href="#lock"/></svg><i></i>
                <label for="sz">Z</label><input id="sz" value="1.000"><svg class="lk"><use href="#lock"/></svg><i></i>
              </div>
              <button class="panel sub"><svg class="i8"><use href="#tri"/></svg>Delta Transform</button>
            </div>
            <button class="panel"><svg class="i8"><use href="#tri"/></svg>Relations<i class="grip"></i></button>
            <button class="panel"><svg class="i8"><use href="#tri"/></svg>Collections<i class="grip"></i></button>
            <button class="panel"><svg class="i8"><use href="#tri"/></svg>Instancing<i class="grip"></i></button>
            <button class="panel"><svg class="i8"><use href="#tri"/></svg>Motion Paths<i class="grip"></i></button>
            <button class="panel"><svg class="i8"><use href="#tri"/></svg>Visibility<i class="grip"></i></button>
            <button class="panel"><svg class="i8"><use href="#tri"/></svg>Viewport Display<i class="grip"></i></button>
            <button class="panel"><svg class="i8"><use href="#tri"/></svg>Custom Properties<i class="grip"></i></button>
          </div>
        </div>
      </section>
    </aside>
  </div>

  <footer class="status">
    <span class="h1"><svg class="mo"><use href="#m1"/></svg>Select</span>
    <span class="h2"><svg class="mo"><use href="#m1d"/></svg>Box Select</span>
    <span class="h3"><svg class="mo"><use href="#m2"/></svg>Rotate View</span>
    <span class="h4"><svg class="mo"><use href="#m3"/></svg>Call Menu</span>
    <span class="stats">Cube | Verts:4/8 | Edges:4/12 | Faces:1/6 | Tris:12 | Mem: 26.4 MiB | 2.83.3</span>
  </footer>

  <div class="menu context" role="menu">
    <div class="title"><svg class="i12"><use href="#vert"/></svg>Vertex Context Menu</div>
    <hr>
    <button role="menuitem"><span><u>S</u>ubdivide</span></button>
    <hr>
    <button role="menuitem"><span><u>E</u>xtrude Vertices</span></button>
    <button role="menuitem"><span><u>B</u>evel Vertices</span><kbd>⇧ ⌘ B</kbd></button>
    <hr>
    <button role="menuitem"><span><u>N</u>ew Edge/Face from Vertices</span><kbd>F</kbd></button>
    <button role="menuitem"><span><u>C</u>onnect Vertex Path</span><kbd>J</kbd></button>
    <button role="menuitem"><span>Connect <u>V</u>ertex Pairs</span></button>
    <hr>
    <button role="menuitem"><span><u>P</u>ush/Pull</span></button>
    <button role="menuitem"><span>Shrink/<u>F</u>atten</span><kbd>⌥ S</kbd></button>
    <button role="menuitem"><span>S<u>h</u>ear</span><kbd>⇧ ⌥ ⌘ S</kbd></button>
    <button role="menuitem"><span>Sl<u>i</u>de Vertices</span><kbd>⇧ V</kbd></button>
    <button role="menuitem"><span><u>R</u>andomize Vertices</span></button>
    <button role="menuitem"><span>Sm<u>o</u>oth Vertices</span></button>
    <button role="menuitem"><span>Smooth <u>L</u>aplacian</span></button>
    <hr>
    <button role="menuitem"><span><u>M</u>irror Vertices</span><svg class="i8"><use href="#tri"/></svg></button>
    <button role="menuitem"><span>Sn<u>a</u>p Vertices</span><svg class="i8"><use href="#tri"/></svg></button>
    <hr>
    <button role="menuitem" class="on"><span>Mer<u>g</u>e Vertices</span><kbd>M</kbd><svg class="i8"><use href="#tri"/></svg></button>
    <button role="menuitem"><span>Spli<u>t</u></span><kbd>Y</kbd></button>
    <button role="menuitem"><span>Separate</span><kbd>P</kbd><svg class="i8"><use href="#tri"/></svg></button>
    <button role="menuitem"><span><u>D</u>issolve Vertices</span></button>
    <button role="menuitem"><span>Delete Vertices</span></button>
  </div>
  <div class="menu merge" role="menu">
    <button role="menuitem"><span><u>A</u>t First</span></button>
    <button role="menuitem"><span>At <u>L</u>ast</span></button>
    <button role="menuitem" class="on"><span>At <u>C</u>enter</span></button>
    <button role="menuitem"><span>A<u>t</u> Cursor</span></button>
    <button role="menuitem"><span>C<u>o</u>llapse</span></button>
    <hr>
    <button role="menuitem"><span><u>B</u>y Distance</span></button>
  </div>
  <svg class="pointer" viewBox="0 0 10 15" aria-hidden="true"><path d="M1 1v10.500l2.500-2.300 1.600 4.300 2-.8-1.700-4H9z" fill="#111" stroke="#fff"/></svg>
</div>
<script src="viewport.js"></script>
</body>
</html>
```

FILE: viewport.js
```js
// Ground-plane grid seen by an orbit camera.
const view = { cx: 539, cy: 337, f: 660, dist: 17.85, az: 25.4 * Math.PI / 180, el: 26.3 * Math.PI / 180 };
const origin = { x: 536, y: 347 };
const sa = Math.sin(view.az), ca = Math.cos(view.az);
const se = Math.sin(view.el), ce = Math.cos(view.el);
const panX = (origin.x - view.cx) * view.dist / view.f;
const panY = (view.cy - origin.y) * view.dist / view.f;

function toCamera(x, y) {
  const ahead = x * ca - y * sa;
  return { r: x * sa + y * ca + panX, u: -ahead * se + panY, d: view.dist - ahead * ce };
}

function segment(x1, y1, x2, y2) {
  const near = 1;
  let a = toCamera(x1, y1), b = toCamera(x2, y2);
  if (a.d < near && b.d < near) return '';
  if (a.d < near) [a, b] = [b, a];
  if (b.d < near) {
    const t = (near - a.d) / (b.d - a.d);
    b = { r: a.r + (b.r - a.r) * t, u: a.u + (b.u - a.u) * t, d: near };
  }
  const p = q => (view.cx + view.f * q.r / q.d).toFixed(1) + ' ' + (view.cy - view.f * q.u / q.d).toFixed(1);
  return 'M' + p(a) + 'L' + p(b);
}

let minor = '', major = '';
for (let i = -120; i <= 120; i++) {
  if (i === 0) continue;
  const s = segment(i, -150, i, 150) + segment(-150, i, 150, i);
  if (i % 10 === 0) major += s; else minor += s;
}
document.getElementById('grid').setAttribute('d', minor);
document.getElementById('grid10').setAttribute('d', major);

// Frame labels on the timeline.
const ruler = document.getElementById('ruler');
for (let f = 20; f <= 240; f += 20) {
  const tick = document.createElement('span');
  tick.textContent = f;
  ruler.appendChild(tick);
}
```

FILE: styles.css
```css
* { box-sizing: border-box; }
body { margin: 0; background: #000; color: #dcdcdc; font: 9px/16px "DejaVu Sans", sans-serif; }
button, input, select { font: inherit; color: inherit; background: none; border: 0; padding: 0; margin: 0; min-width: 0; outline: 0; }
button { display: flex; align-items: center; white-space: nowrap; }
svg { display: block; flex: none; }
p { margin: 0; }
.defs { position: absolute; width: 0; height: 0; }
.i8 { width: 8px; height: 8px; }
.i12 { width: 12px; height: 12px; }
.i14 { width: 14px; height: 14px; }
.i20 { width: 20px; height: 20px; }

.app { position: relative; display: flex; flex-direction: column; min-height: 100vh; margin: 0 64px; background: #1b1b1b; }

.topbar { display: flex; align-items: center; height: 22px; background: #1e1e1e; }
.menus { display: flex; gap: 11px; padding-left: 8px; width: 209px; align-items: center; }
.menus button { height: 16px; margin-top: -2px; }
.menus button:first-child { margin-right: -5px; }
.tabs { display: flex; align-self: flex-end; flex: 1; min-width: 0; }
.tabs button { height: 17px; padding: 0 7px; color: #8e8e8e; border-radius: 3px 3px 0 0; }
.tabs .on { background: #3a3a3a; color: #f0f0f0; }
.tabs .covered { visibility: hidden; padding: 0 5px; }
.tabs .plus { padding: 0 2px; }
.plus svg { width: 8px; height: 8px; }
.ids { display: flex; gap: 6px; padding-right: 8px; }
.idblock { display: flex; height: 16px; margin-top: -2px; background: #181818; border-radius: 3px; }
.idblock input { width: 95px; padding-left: 5px; background: #1a1a1a; }
.idblock button { justify-content: center; width: 16px; }
.idblock .idpick { width: 24px; background: #262626; }
.idblock .lit { background: #484848; }
.idblock .dim { color: #555; }

.workspace { display: flex; flex: 1; gap: 3px; }
.left { display: flex; flex-direction: column; flex: 1; min-width: 0; gap: 3px; }
.right { display: flex; flex-direction: column; gap: 3px; width: 199px; }

.viewport { position: relative; display: flex; flex-direction: column; flex: 1; overflow: hidden; background: linear-gradient(#3b3b3b, #383838 30%, #343434 60%); border-radius: 4px; }
.scene { position: absolute; inset: 0; width: 100%; height: 100%; }
.grid { fill: none; stroke: #4b4b4b; stroke-width: 1; }
.major { stroke: #535353; }
.axis { stroke-width: 1; }
.object { fill: none; stroke: #0a0a0a; }
.vhead { position: relative; padding: 0 7px 0 8px; background: #3c3c3c99; }
.row { display: flex; align-items: center; height: 20px; }
.push { flex: 1; }
.dark { height: 15px; padding: 0 2px; background: #2a2a2a; border-radius: 3px; gap: 2px; }
.tool { margin: 0 11px 0 5px; }
.group { display: flex; height: 15px; gap: 1px; border-radius: 3px; overflow: hidden; }
.group button { justify-content: center; width: 14px; height: 15px; background: #4c4c4c; color: #c4c4c4; }
.group .on { background: #4a69ab; }
.group .drop { width: 15px; background: #2c2c2c; }
.orient { margin-left: 230px; }
.mir { margin-right: 3px; color: #aaa; }
.xyz { margin-right: 5px; }
.xyz button { width: 13px; }
.soft { justify-content: center; width: 14px; height: 15px; background: #444; border-radius: 3px; color: #888; margin-right: 6px; }
.row .soft + .dark { padding-left: 4px; gap: 2px; }
.mode { width: 86px; margin-right: 6px; }
.mode span { flex: 1; text-align: left; padding-left: 1px; }
.vmenus { display: flex; margin-left: 5px; }
.vmenus button { height: 15px; padding: 0 5px; background: #343434; margin-right: 1px; border-radius: 2px; }
.shade { display: flex; gap: 6px; }
.vis { gap: 0; }

.vbody { position: relative; display: flex; flex: 1; padding: 7px 0 0 7px; }
.toolbar { display: flex; flex-direction: column; gap: 4px; width: 32px; }
.tg { border-radius: 4px; overflow: hidden; background: #262626; }
.tg button { justify-content: center; width: 32px; height: 28px; }
.tg svg { width: 20px; height: 20px; margin-right: 2px; }
.tg .on { background-color: #4a6db8; }
.tg .more { background-image: linear-gradient(135deg, transparent 50%, #8a8a8a 50%); background-size: 4px 4px; background-position: 27px 22px; background-repeat: no-repeat; }
.info { flex: 1; padding-left: 23px; margin-top: -1px; color: #fff; }
.nav { display: flex; flex-direction: column; align-items: flex-end; gap: 3px; width: 80px; padding: 1px 6px 0 0; }
.gizmo { width: 64px; height: 64px; margin: 0 1px -2px 0; }
.gizmo text { font-size: 9px; fill: #111; text-anchor: middle; }
.nav button { justify-content: center; width: 22px; height: 22px; border-radius: 50%; background: #2d2d2d; }
.nav button svg { width: 14px; height: 14px; color: #eee; }
.side { position: absolute; right: 0; top: 10px; width: 6px; height: 14px; background: #2c2c2c; }

.timeline { position: relative; height: 50px; background: #262626; border-radius: 4px; overflow: hidden; }
.thead { display: flex; align-items: center; justify-content: space-between; height: 20px; padding: 0 15px 0 8px; background: #303030; }
.tmenus { display: flex; width: 401px; }
.tmenus .dark { gap: 3px; margin-right: 1px; padding: 0 2px; }
.tmenus .dark:first-child { gap: 0; margin-right: 8px; }
.pl { padding: 0 5px; }
.play { display: flex; gap: 6px; flex: 1; }
.play svg { width: 13px; height: 13px; fill: #e6e6e6; }
.play button { justify-content: center; background: #505050; }
.play .group button { width: 15px; }
.play .rec { width: 14px; height: 15px; border-radius: 3px; }
.frames { display: flex; gap: 6px; height: 15px; }
.frames input { text-align: center; }
.cur { width: 59px; background: #4c4c4c; border-radius: 3px; }
.range { display: flex; gap: 1px; border-radius: 3px; overflow: hidden; }
.range button, .range label { background: #4c4c4c; }
.range label { display: flex; justify-content: space-between; width: 69px; padding: 0 9px 0 12px; line-height: 15px; }
.frames .range input { width: 24px; text-align: right; }
.ruler { display: grid; grid-template-columns: 67px repeat(12, 1fr); height: 20px; align-items: center; text-align: center; padding: 0 35px 0 0; color: #a8a8a8; }
.ruler .now { justify-self: end; margin-right: 22px; width: 20px; height: 15px; line-height: 15px; background: #4a69ab; color: #fff; border-radius: 3px; font-weight: 400; }
.scroll { padding: 2px 6px; }
.scroll i { display: flex; justify-content: space-between; height: 7px; padding: 1px; border-radius: 4px; background: #585858; }
.scroll i::before, .scroll i::after { content: ""; width: 5px; height: 5px; border-radius: 50%; background: #3c3c3c; }
.edgetab { position: absolute; bottom: 6px; width: 6px; height: 14px; background: #1e1e1e; color: #999; overflow: hidden; }
.lt { left: 0; }
.rt { right: 0; }

.outliner { height: 218px; background: #282828; border-radius: 4px; overflow: hidden; }
.ohead { display: flex; align-items: center; height: 21px; padding: 0 3px 2px 9px; background: #2f2f2f; }
.ohead .dark { background: #242424; margin-right: 5px; gap: 0; }
.find { display: flex; align-items: center; flex: 1; height: 14px; margin-left: 6px; padding-left: 3px; background: #1a1a1a; border-radius: 3px; }
.find input { width: 60px; }
.fil { margin-left: 16px; }
.rows { height: 197px; background: repeating-linear-gradient(#262626 0 16px, #2a2a2a 16px 32px); }
.orow { display: flex; align-items: center; height: 16px; }
.orow span { margin: 0 15px 0 3px; }
.orow .eye { margin: 0 8px 0 auto; }
.ic { width: 15px; height: 14px; padding: 1px; }
.l0 { padding-left: 18px; }
.orow.l0 span { margin-left: 5px; }
.l1 { padding-left: 20px; }
.l1 input { appearance: none; width: 9px; height: 9px; margin: 0 4px 0 8px; background: #e8e8e8; border-radius: 1px; }
.l1 input:checked { background: #e8e8e8 url("data:image/svg+xml,%3Csvg xmlns='http://www.w3.org/2000/svg' viewBox='0 0 9 9'%3E%3Cpath d='M2 4.500 4 6.500 7.500 2' fill='none' stroke='%23222' stroke-width='1.300'/%3E%3C/svg%3E"); }
.l2 { padding-left: 36px; background: linear-gradient(#666, #666) 39px 0/1px 100% no-repeat, linear-gradient(#666, #666) 42px 8px/8px 1px no-repeat; }
.l2:last-child { background-size: 1px 8px, 8px 1px; }
.l2 > svg:nth-child(2) { margin-left: 5px; }
.chip { background: #ffffff22; border-radius: 3px; }
.tint { background: #2bbd8c33; border-radius: 3px; }
.or { color: #d07f45; }
.gr { color: #2bbd8c; }
.sel { background-color: #334a80; }
.sel span { color: #e8a042; }

.props { display: flex; flex-direction: column; flex: 1; background: #383838; border-radius: 4px; overflow: hidden; }
.phead { display: flex; align-items: center; height: 19px; padding: 0 7px 2px 8px; background: #313131; }
.phead .dark { background: #262626; gap: 0; }
.ob { margin: 0 6px 0 11px; }
.ob, .obn { --core: #eee; }
.pin { margin-left: auto; color: #888; }
.pmain { display: flex; flex: 1; }
.ptabs { width: 23px; padding: 7px 0 0 3px; background: #1f1f1f; }
.ptabs button { justify-content: center; width: 20px; height: 22px; padding-right: 2px; background: #2b2b2b; }
.ptabs .first { margin-top: 7px; }
.ptabs .first.on { margin-top: 9px; }
.ptabs .on { background: #3a3a3a; color: #e08a46; }
.ptabs .rd { color: #bf4a66; }
.ptabs .bl { color: #6c8fd0; }
.ptabs .gr { color: #2bbd8c; }
.panels { flex: 1; padding-top: 7px; }
.name { display: flex; height: 15px; margin: 0 8px 7px 7px; gap: 1px; }
.name button { width: 24px; background: #2a2a2a; padding-left: 3px; border-radius: 3px 0 0 3px; }
.name input { flex: 1; padding-left: 6px; background: #1b1b1b; border-radius: 0 3px 3px 0; }
.panel { width: 100%; height: 19px; padding: 0 7px 0 5px; gap: 5px; color: #cfcfcf; }
.panel > svg { color: #a0a0a0; }
.grip { margin-left: auto; width: 9px; height: 4px; border: 1px dotted #777; border-width: 1px 0; }
.transform { padding-top: 7px; background: #303030; }
.set { display: grid; grid-template-columns: 77px 56px 17px 5px; column-gap: 3px; row-gap: 1px; align-items: center; margin-bottom: 5px; }
.set label { padding-right: 4px; text-align: right; line-height: 15px; }
.set input { height: 15px; width: 56px; text-align: center; background: #515151; }
.set i { width: 3px; height: 3px; margin-left: 1px; border-radius: 50%; background: #ddd; }
.lk { width: 13px; height: 11px; color: #929292; }
.pick { display: flex; align-items: center; height: 14px; background: #272727; border-radius: 3px; }
.pick select { appearance: none; flex: 1; padding-left: 4px; }
.sub { padding-left: 16px; margin-top: 7px; }

.status { display: flex; align-items: center; height: 17px; padding: 1px 27px 0 6px; background: #232323; color: #a2a2a2; }
.status span { display: flex; align-items: center; gap: 5px; }
.mo { width: 16px; height: 12px; }
.h1 { width: 54px; }
.h2 { width: 162px; }
.h3 { width: 216px; }
.status .stats { margin-left: auto; }

.menu { position: absolute; display: flex; flex-direction: column; background: #1c1c1c; box-shadow: 0 0 3px #0008; border-radius: 2px; }
.menu button { flex: 2 1 0; min-height: 0; margin: 0 1px; padding: 0 1px 0 23px; text-align: left; line-height: 14px; }
.menu button span { flex: 1; }
.menu u { text-underline-offset: 1px; }
.menu .on { background: linear-gradient(#4968ac, #4968ac) center/100% 15px no-repeat; color: #fff; }
.menu hr { flex: 1 1 0; width: 100%; margin: 0; border: 0; background: linear-gradient(#2a2a2a, #2a2a2a) center/100% 1px no-repeat; }
.menu kbd { font: inherit; color: #686868; margin-right: 6px; }
.menu kbd + svg { margin-left: -7px; }
.menu button svg { color: #8c8c8c; }
.menu .on kbd { color: #7a8bb5; }
.menu .on svg { color: #c4cde4; }
.menu .title { display: flex; align-items: center; gap: 6px; height: 20px; padding: 2px 0 0 6px; color: #989898; }
.context { left: 401px; top: 6px; width: 171px; height: 428px; padding-bottom: 3px; }
.merge { left: 572px; top: 341px; width: 170px; height: 116px; padding: 2px 0 3px; }
.merge hr { flex: 0 0 5px; }
.pointer { position: absolute; left: 603px; top: 386px; width: 10px; height: 15px; }
```
